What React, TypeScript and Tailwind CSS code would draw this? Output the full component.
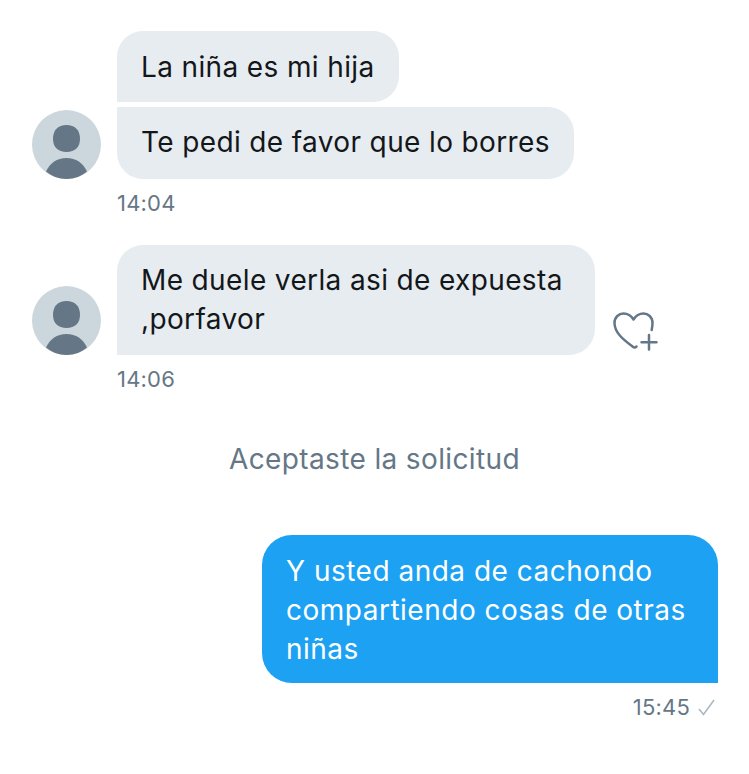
import React from "react";

function Avatar() {
  return (
    <svg width="69" height="69" viewBox="0 0 69 69" className="block shrink-0">
      <circle cx="34.5" cy="34.5" r="34.5" fill="#ccd6dd" />
      <path d="M21 29C21 20 26 15 34.500 15S48 20 48 29C48 37 43 42 34.500 42S21 37 21 29z" fill="#657786" />
      <path d="M14 61.500C18 53 25 48 34.500 48S51 53 55 61.500C50 66 42.500 69 34.500 69S19 66 14 61.500z" fill="#657786" />
    </svg>
  );
}

export default function App() {
  const font = "font-['Inter','Liberation_Sans',sans-serif]";
  return (
    <div className={`w-[749px] h-[774px] overflow-hidden bg-white pt-[31px] ${font} text-[28px] leading-[39px] tracking-[0.37px] text-[#14171a]`}>
      <div className="flex items-end gap-4 pl-8">
        <Avatar />
        <div className="flex flex-col items-start gap-[5px]">
          <div className="bg-[#e6ecf0] rounded-[26px] rounded-bl-none px-6 pt-[17px] h-[71px]">La niña es mi hija</div>
          <div className="bg-[#e6ecf0] rounded-[26px] rounded-tl-none px-6 pt-[16px] h-[72px]">Te pedi de favor que lo borres</div>
        </div>
      </div>
      <div className="pl-[117px] mt-[10px] text-[22px] leading-[28px] tracking-[0.2px] text-[#657786]">14:04</div>
      <div className="flex items-end gap-4 pl-8 mt-[28px]">
        <Avatar />
        <div className="bg-[#e6ecf0] rounded-[26px] rounded-bl-none px-6 pt-[16px] h-[110px] w-[478px]">Me duele verla asi de expuesta<br />,porfavor</div>
        <svg width="46" height="42" viewBox="0 0 46 42" fill="none" stroke="#657786" strokeWidth="2.500" strokeLinecap="round" strokeLinejoin="round" className="mb-[3px] ml-[1px]">
          <path d="M24.500 36.500c-1 1-2.500 1.200-3.800 .2C12 30 2.500 23 2.500 13 2.500 7 7 3.500 11.500 3.500c4 0 7.500 2 10 6 2.500-4 6-6 10-6 4.500 0 9 3.500 9 9.500 0 2-.3 4-.8 7" />
          <path d="M37 25v14.500M29.500 32.200h15" />
        </svg>
      </div>
      <div className="pl-[117px] mt-[10px] text-[22px] leading-[28px] tracking-[0.2px] text-[#657786]">14:06</div>
      <div className="text-center mt-[47px] text-[#657786]">Aceptaste la solicitud</div>
      <div className="flex justify-end pr-[31px] mt-[56px]">
        <div className="bg-[#1da1f2] text-white rounded-[30px] rounded-br-none px-6 pt-[17px] h-[148px] w-[456px] tracking-[0.5px]">Y usted anda de cachondo<br />compartiendo cosas de otras<br />niñas</div>
      </div>
      <div className="flex justify-end items-center gap-[8px] pr-[34px] mt-[10px] text-[22px] leading-[28px] tracking-[0.2px] text-[#657786]">
        <span>15:45</span>
        <svg width="17" height="17" viewBox="0 0 17 17" fill="none" stroke="#aab8c2" strokeWidth="1.600"><path d="M1 10l4.500 5.500L16 1" /></svg>
      </div>
    </div>
  );
}
